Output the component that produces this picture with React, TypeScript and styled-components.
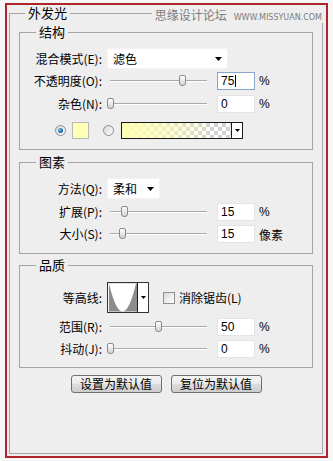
import React from 'react'
import styled, { createGlobalStyle } from 'styled-components'

const GlobalStyle = createGlobalStyle`
  html, body {
    margin: 0;
    padding: 0;
    background: #f6f6f6;
  }
  body {
    font-family: "Noto Sans CJK SC", "Noto Sans", sans-serif;
    font-size: 12px;
    color: #000;
  }
`

const Frame = styled.div`
  position: relative;
  box-sizing: border-box;
  margin: 3px 0 0 5px;
  width: 323px;
  height: 455px;
  padding: 0 3px 0 2px;
  border: 2px solid #b0252a;
  background: #eeeeee;
`

const Watermark = styled.div`
  position: absolute;
  top: 2px;
  right: 3px;
  display: flex;
  align-items: baseline;
  gap: 7px;
  padding: 0 1px 0 3px;
  white-space: nowrap;
  background: #eeeeee;
  color: #7c7c7c;
`

const WmCn = styled.span`
  font-size: 12px;
  line-height: 16px;
`

const WmEn = styled.span`
  font-family: "DejaVu Sans", sans-serif;
  font-size: 8px;
  letter-spacing: 0;
`

const Group = styled.fieldset<{ $h: number; $mt: number; $mx: number }>`
  box-sizing: border-box;
  min-width: 0;
  height: ${p => p.$h}px;
  margin: ${p => p.$mt}px ${p => p.$mx}px 0;
  padding: 0;
  border: 1px solid #a5a5a5;
`

const Legend = styled.legend<{ $x: number }>`
  margin-left: ${p => p.$x}px;
  padding: 0 3px;
  font-size: 13px;
  line-height: 16px;
`

const Row = styled.div<{ $mt: number; $h: number; $ml?: number }>`
  display: flex;
  align-items: center;
  height: ${p => p.$h}px;
  margin-top: ${p => p.$mt}px;
  padding-left: ${p => p.$ml ?? 0}px;
`

const Label = styled.span`
  flex: none;
  width: 82px;
  margin-right: 5px;
  text-align: right;
  white-space: nowrap;
  font-size: 12px;
  line-height: 16px;
`

const Select = styled.div<{ $w: number }>`
  box-sizing: border-box;
  flex: none;
  display: flex;
  align-items: center;
  width: ${p => p.$w}px;
  height: 21px;
  padding: 0 5px 0 5px;
  background: #fff;
  border: 1px solid #f3f3f3;
  font-size: 12px;
`

const SelectArrow = styled.svg`
  margin-left: auto;
`

const Slider = styled.div`
  position: relative;
  flex: none;
  width: 103px;
  height: 18px;

  &::before {
    content: '';
    position: absolute;
    left: 3px;
    right: 3px;
    top: 8px;
    height: 1px;
    background: #a9a9a9;
    box-shadow: 0 1px 0 #ffffff;
  }
`

const Thumb = styled.div`
  position: absolute;
  top: 3px;
  box-sizing: border-box;
  width: 7px;
  height: 11px;
  border: 1px solid #8a8a8a;
  border-radius: 2px 2px 3px 3px;
  background: linear-gradient(#ffffff, #d2d2d2);
`

const Field = styled.div<{ $focus?: boolean }>`
  box-sizing: border-box;
  flex: none;
  display: flex;
  align-items: center;
  width: 38px;
  height: 18px;
  margin-left: 7px;
  padding-left: 3px;
  background: #fff;
  border: 1px solid ${p => (p.$focus ? '#86a7c8' : '#e4e4e4')};
  font-family: "Liberation Sans", Arial, sans-serif;
  font-size: 12px;
`

const Caret = styled.span`
  width: 1px;
  height: 12px;
  margin-left: 1px;
  background: #000;
`

const Unit = styled.span`
  margin-left: 4px;
  font-family: "Liberation Sans", "Noto Sans CJK SC", sans-serif;
  font-size: 12px;
`

const Radio = styled.span<{ $on?: boolean }>`
  box-sizing: border-box;
  flex: none;
  display: flex;
  align-items: center;
  justify-content: center;
  width: 11px;
  height: 11px;
  border-radius: 50%;
  border: 1px solid #8e8f8f;
  background: linear-gradient(135deg, #d6d6d6, #ffffff);

  &::after {
    content: '';
    display: ${p => (p.$on ? 'block' : 'none')};
    width: 5px;
    height: 5px;
    border-radius: 50%;
    background: radial-gradient(circle at 35% 35%, #6fc0f0, #0c5a9e 70%);
  }
`

const Swatch = styled.span`
  box-sizing: border-box;
  flex: none;
  width: 17px;
  height: 17px;
  margin: 0 14px 0 6px;
  border: 1px solid #b9b9b9;
  background: #ffffb6;
`

const GradientPicker = styled.div`
  box-sizing: border-box;
  flex: none;
  display: flex;
  width: 122px;
  height: 17px;
  margin-left: 7px;
  border: 1px solid #1a1a1a;
`

const GradientFill = styled.div`
  flex: 1;
  background:
    linear-gradient(to right, #ffffb4 0%, rgba(255, 255, 180, 0.55) 45%, rgba(255, 255, 180, 0) 85%),
    repeating-conic-gradient(#d2d2d2 0 25%, #ffffff 0 50%) 0 0 / 8px 8px;
`

const PickerArrow = styled.div`
  flex: none;
  display: flex;
  align-items: center;
  justify-content: center;
  width: 10px;
  border-left: 1px solid #1a1a1a;
  background: #fff;
`

const Contour = styled.div`
  box-sizing: border-box;
  flex: none;
  display: flex;
  width: 42px;
  height: 31px;
  border: 1px solid #333;
  background: #fff;
`

const Check = styled.span`
  box-sizing: border-box;
  flex: none;
  width: 12px;
  height: 12px;
  margin: 0 4px 0 14px;
  border: 1px solid #8f8f8f;
  background: linear-gradient(135deg, #d9d9d9, #ffffff);
`

const CheckText = styled.span`
  font-size: 12px;
`

const ButtonBar = styled.div`
  display: flex;
  justify-content: center;
  gap: 9px;
  margin-top: 7px;
`

const Button = styled.button`
  box-sizing: border-box;
  width: 91px;
  height: 18px;
  padding: 0;
  border: 1px solid #707070;
  border-radius: 3px;
  background: linear-gradient(#f4f4f4 0%, #ebebeb 48%, #dcdcdc 52%, #cdcdcd 100%);
  font-family: "Noto Sans CJK SC", sans-serif;
  font-size: 12px;
  line-height: 16px;
  color: #000;
`

const Down = () => (
  <SelectArrow width="7" height="4" viewBox="0 0 7 4">
    <polygon points="0,0 7,0 3.5,4" fill="#000" />
  </SelectArrow>
)

const SmallDown = () => (
  <svg width="5" height="3" viewBox="0 0 5 3">
    <polygon points="0,0 5,0 2.5,3" fill="#000" />
  </svg>
)

const SliderControl = ({ value }: { value: number }) => (
  <Slider>
    <Thumb style={{ left: 3 + value * 97 - 3.5 }} />
  </Slider>
)

interface SliderRowProps {
  label: string
  value: number
  text: string
  unit: string
  mt: number
  focus?: boolean
}

const SliderRow = ({ label, value, text, unit, mt, focus }: SliderRowProps) => (
  <Row $mt={mt} $h={18}>
    <Label>{label}</Label>
    <SliderControl value={value} />
    <Field $focus={focus}>
      {text}
      {focus && <Caret />}
    </Field>
    <Unit>{unit}</Unit>
  </Row>
)

export default function App() {
  return (
    <>
      <GlobalStyle />
      <Frame>
        <Group $h={449} $mt={0} $mx={0}>
          <Legend $x={15}>外发光</Legend>

          <Group $h={126} $mt={3} $mx={9}>
            <Legend $x={16}>结构</Legend>
            <Row $mt={8} $h={21}>
              <Label>混合模式(E):</Label>
              <Select $w={121}>
                滤色
                <Down />
              </Select>
            </Row>
            <SliderRow label="不透明度(O):" value={0.75} text="75" unit="%" mt={3} focus />
            <SliderRow label="杂色(N):" value={0} text="0" unit="%" mt={5} />
            <Row $mt={9} $h={17} $ml={35}>
              <Radio $on />
              <Swatch />
              <Radio />
              <GradientPicker>
                <GradientFill />
                <PickerArrow>
                  <SmallDown />
                </PickerArrow>
              </GradientPicker>
            </Row>
          </Group>

          <Group $h={100} $mt={4} $mx={9}>
            <Legend $x={16}>图素</Legend>
            <Row $mt={8} $h={21}>
              <Label>方法(Q):</Label>
              <Select $w={53}>
                柔和
                <Down />
              </Select>
            </Row>
            <SliderRow label="扩展(P):" value={0.15} text="15" unit="%" mt={4} />
            <SliderRow label="大小(S):" value={0.13} text="15" unit="像素" mt={4} />
          </Group>

          <Group $h={111} $mt={3} $mx={9}>
            <Legend $x={16}>品质</Legend>
            <Row $mt={9} $h={31}>
              <Label>等高线:</Label>
              <Contour>
                <svg width="30" height="29" viewBox="0 0 30 29">
                  <rect width="30" height="29" fill="#8c8c8c" />
                  <path d="M1,0 Q15,58 29,0 Z" fill="#ffffff" />
                  <line x1="0.5" y1="0" x2="0.5" y2="29" stroke="#ffffff" />
                </svg>
                <PickerArrow>
                  <SmallDown />
                </PickerArrow>
              </Contour>
              <Check />
              <CheckText>消除锯齿(L)</CheckText>
            </Row>
            <SliderRow label="范围(R):" value={0.5} text="50" unit="%" mt={5} />
            <SliderRow label="抖动(J):" value={0} text="0" unit="%" mt={4} />
          </Group>

          <ButtonBar>
            <Button>设置为默认值</Button>
            <Button>复位为默认值</Button>
          </ButtonBar>
        </Group>

        <Watermark>
          <WmCn>思缘设计论坛</WmCn>
          <WmEn>WWW.MISSYUAN.COM</WmEn>
        </Watermark>
      </Frame>
    </>
  )
}
